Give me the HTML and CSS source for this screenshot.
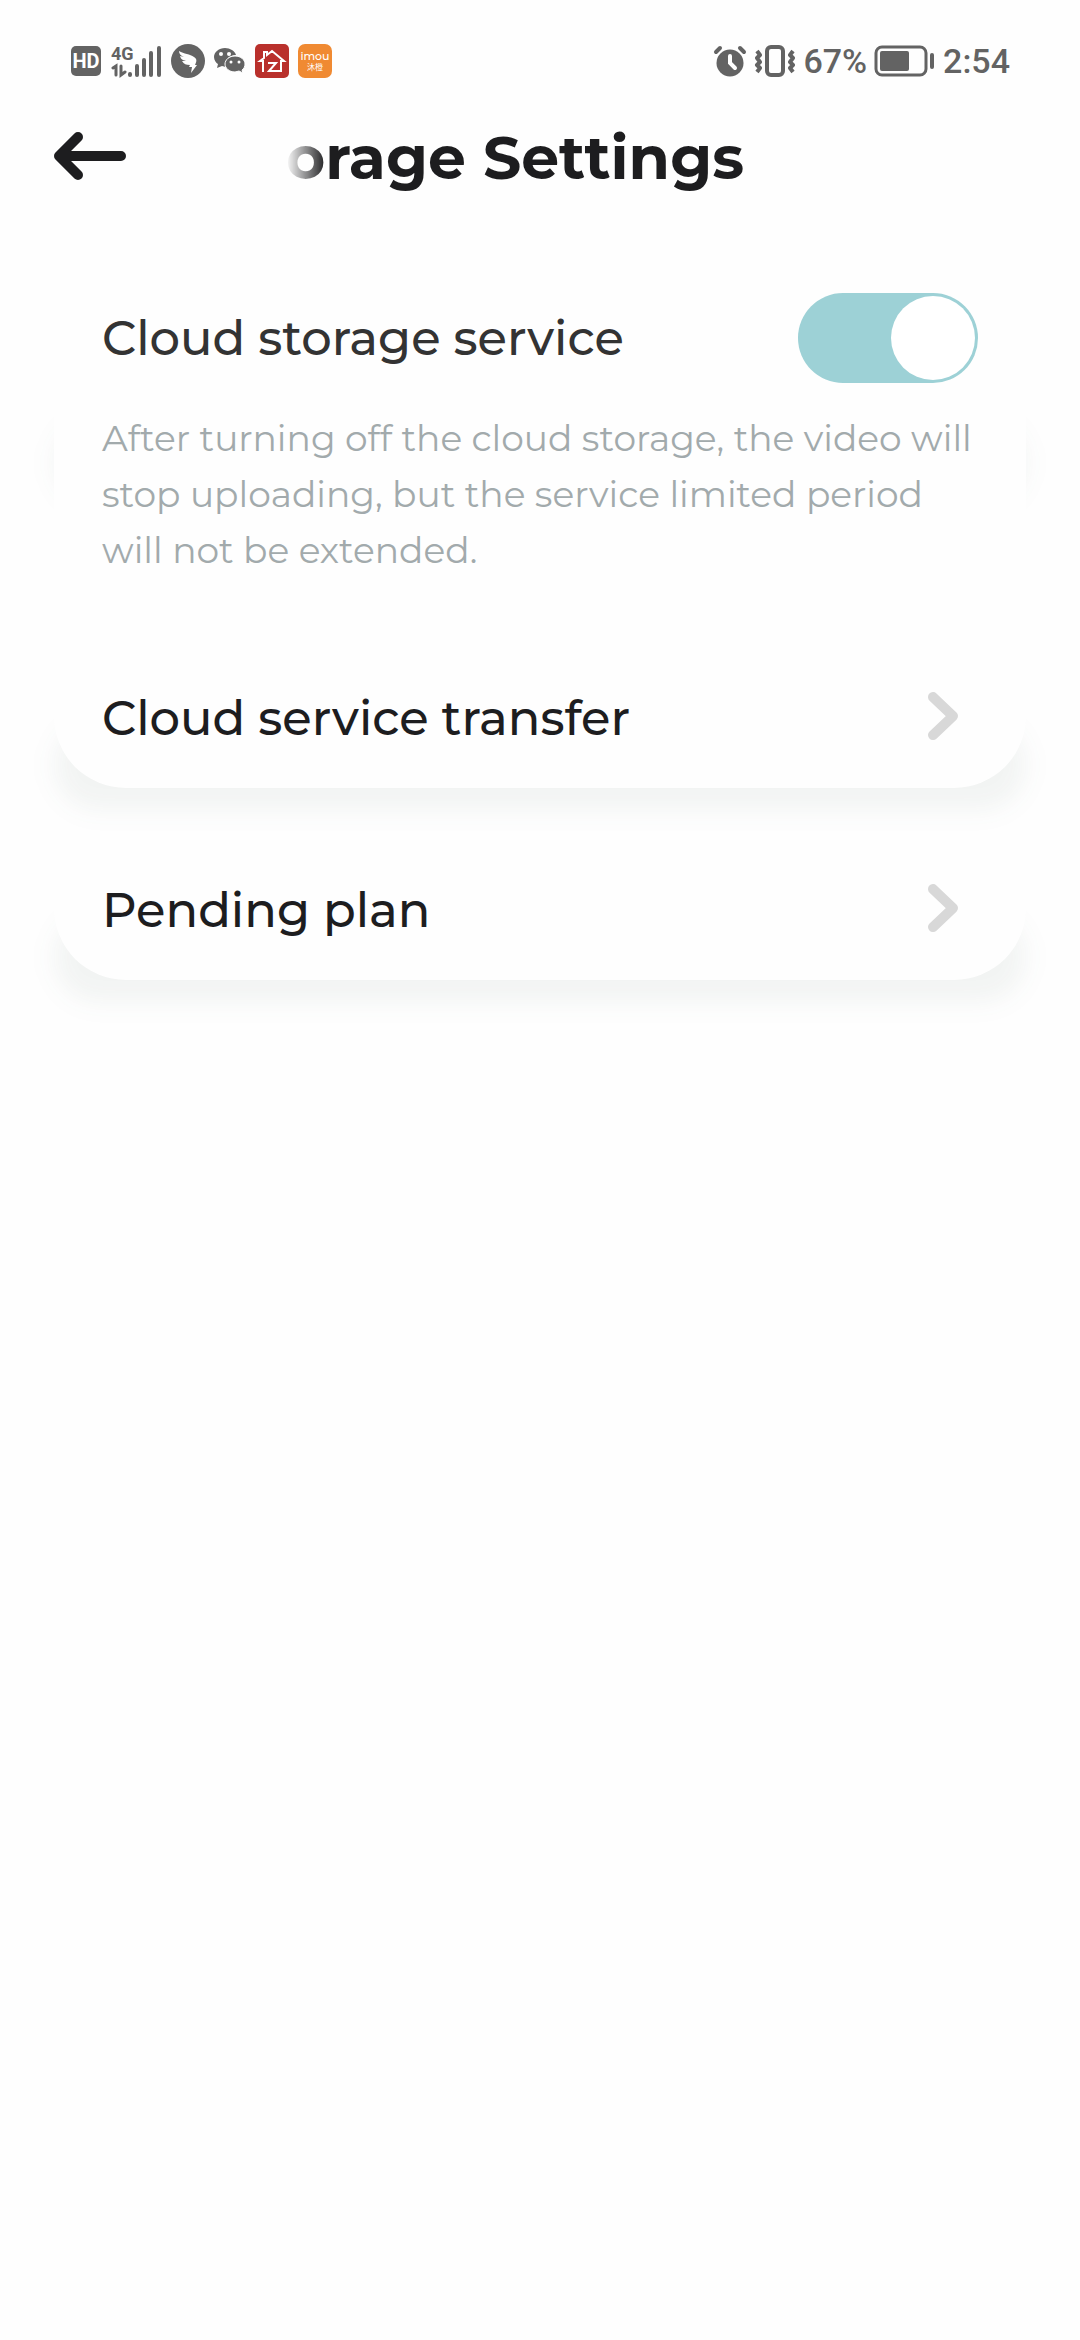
FILE: index.html
```
<!DOCTYPE html>
<html lang="en">
<head>
    <meta charset="UTF-8">
    <meta name="viewport" content="width=device-width, initial-scale=1.0">
    <title>Storage Settings</title>
    <link rel="stylesheet" href="styles.css">
</head>
<body>
    <!-- Status bar -->
    <div class="status-bar">
        <div class="status-left">
            <svg width="32" height="36" viewBox="0 0 32 36">
                <rect x="1" y="3" width="30" height="30" rx="5" fill="#636363"/>
                <text x="16" y="25" class="hd-text">HD</text>
            </svg>
            <svg width="51" height="36" viewBox="0 0 51 36">
                <text x="0" y="17" class="net-text">4G</text>
                <g stroke="#636363" stroke-linecap="round" fill="none">
                    <path d="M2 25l3-2v9M10 23v9l4-3" stroke-width="3"/>
                    <path d="M19 31v1M26 23v9M33 17v15M40 10v22M48 5v27" stroke-width="4"/>
                </g>
            </svg>
            <svg width="34" height="36" viewBox="0 0 34 36">
                <circle cx="17" cy="18" r="17" fill="#636363"/>
                <path d="M8 8c5 3 11 3 15 6 3 2 3 4 1 8h2l-6 8 1-6h-3l1-2c-4 0-6-1-8-4l4 0c-4-1-5-2-6-5l4 1c-3-1-5-3-5-6z" fill="#fff"/>
            </svg>
            <svg width="32" height="36" viewBox="0 0 32 36">
                <path d="M11 5C5 5 0 9 0 14c0 3 2 6 4 7l-1 4 5-2 4 1c-2-7 3-12 10-12-1-4-6-7-11-7z" fill="#636363"/>
                <path d="M21 13c-6 0-10 4-10 8s4 8 10 8l4-1 4 2-1-3c2-1 3-4 3-6 0-4-4-8-10-8z" fill="#636363" stroke="#fefefe" stroke-width="1"/>
                <circle cx="7" cy="11" r="2" fill="#fff"/>
                <circle cx="15" cy="11" r="2" fill="#fff"/>
                <circle cx="17" cy="19" r="1.5" fill="#fff"/>
                <circle cx="25" cy="19" r="1.5" fill="#fff"/>
            </svg>
            <svg width="34" height="36" viewBox="0 0 34 36">
                <rect y="1" width="34" height="34" rx="5" fill="#b9302c"/>
                <path d="M8 29V18H5l4-3V9h3v3l5-4 12 10h-3v10h-5M13 20h8l-7 8h8" fill="none" stroke="#fff" stroke-width="2"/>
            </svg>
            <svg width="34" height="36" viewBox="0 0 34 36">
                <rect y="1" width="34" height="34" rx="7" fill="#f08a32"/>
                <text x="17" y="17" class="imou-text">imou</text>
                <text x="17" y="27" class="imou-sub">沐橙</text>
            </svg>
        </div>
        <div class="status-right">
            <svg width="34" height="36" viewBox="0 0 34 36">
                <circle cx="17" cy="20" r="13.5" fill="#636363"/>
                <path d="M3 9l4-4M31 9l-4-4" stroke="#636363" stroke-width="4" stroke-linecap="round"/>
                <path d="M17 13v7l5 5" fill="none" stroke="#fff" stroke-width="4" stroke-linecap="round"/>
            </svg>
            <svg width="42" height="36" viewBox="0 0 42 36" fill="none" stroke="#636363">
                <rect x="13" y="4" width="16" height="28" rx="4" stroke-width="4"/>
                <path d="M3 8l3 4-3 3 3 4-3 3 3 3-3 4M39 8l-3 4 3 3-3 4 3 3-3 3 3 4" stroke-width="4" stroke-linejoin="round"/>
            </svg>
            <span>67%</span>
            <svg width="62" height="36" viewBox="0 0 62 36">
                <rect x="2" y="4" width="50" height="28" rx="6" fill="none" stroke="#636363" stroke-width="3"/>
                <rect x="6" y="8" width="29" height="20" rx="2" fill="#636363"/>
                <path d="M58 12v12" stroke="#636363" stroke-width="4" stroke-linecap="round"/>
            </svg>
            <span>2:54</span>
        </div>
    </div>

    <!-- Page header -->
    <header class="header">
        <a class="back" href="#" aria-label="Back">
            <svg width="72" height="48" viewBox="0 0 72 48" fill="none" stroke="#1d1d1f" stroke-width="10" stroke-linecap="round" stroke-linejoin="round">
                <path d="M24 5L5 24l19 19M5 24h62"/>
            </svg>
        </a>
        <h1 class="title">orage Settings</h1>
    </header>

    <main class="settings">
        <section class="service">
            <div class="service-row">
                <label for="cloud-service">Cloud storage service</label>
                <input class="switch" type="checkbox" role="switch" id="cloud-service" checked>
            </div>
            <p class="description">After turning off the cloud storage, the video will stop uploading, but the service limited period will not be extended.</p>
        </section>

        <a class="card" href="#">
            <span>Cloud service transfer</span>
            <svg width="30" height="48" viewBox="0 0 30 48" fill="none" stroke="#d8d8d8" stroke-width="10" stroke-linecap="round" stroke-linejoin="round">
                <path d="M5 5l20 19L5 43"/>
            </svg>
        </a>

        <a class="card" href="#">
            <span>Pending plan</span>
            <svg width="30" height="48" viewBox="0 0 30 48" fill="none" stroke="#d8d8d8" stroke-width="10" stroke-linecap="round" stroke-linejoin="round">
                <path d="M5 5l20 19L5 43"/>
            </svg>
        </a>
    </main>
</body>
</html>
```
FILE: styles.css
```
/* General */
* {
    box-sizing: border-box;
}

body {
    margin: 0;
    min-height: 100vh;
    background: #fefefe;
    color: #1d1d1f;
    font-family: Montserrat, Inter, sans-serif;
}

svg {
    display: block;
    flex-shrink: 0;
}

/* Status bar */
.status-bar {
    display: flex;
    justify-content: space-between;
    align-items: center;
    height: 108px;
    padding: 14px 70px 0;
    color: #636363;
    font-family: Roboto, sans-serif;
    font-size: 34px;
    font-weight: 500;
}

.status-left,
.status-right {
    display: flex;
    align-items: center;
    gap: 9px;
}

.status-right {
    gap: 7px;
}

.hd-text {
    fill: #fff;
    font-size: 20px;
    font-weight: 700;
    text-anchor: middle;
}

.net-text {
    fill: #636363;
    font-family: "Liberation Sans Narrow", Roboto, sans-serif;
    font-size: 18px;
    font-weight: 700;
}

.imou-text {
    fill: #fff;
    font-family: Montserrat, Inter, sans-serif;
    font-size: 11px;
    font-weight: 500;
    text-anchor: middle;
}

.imou-sub {
    fill: #fff;
    font-family: "Noto Sans CJK SC", sans-serif;
    font-size: 8px;
    font-weight: 400;
    text-anchor: middle;
}

/* Header */
.header {
    display: flex;
    align-items: center;
    height: 100px;
    padding: 0 54px;
}

.back {
    margin-right: 160px;
    padding-bottom: 4px;
}

.title {
    margin: 0;
    font-size: 60px;
    font-weight: 700;
    line-height: 80px;
    white-space: nowrap;
    -webkit-mask-image: linear-gradient(to right, transparent, #000 40px);
    mask-image: linear-gradient(to right, transparent, #000 40px);
}

/* Settings list */
.settings {
    display: flex;
    flex-direction: column;
    gap: 48px;
    padding: 60px 54px;
    font-size: 48px;
    font-weight: 500;
    line-height: 60px;
}

.service,
.card {
    position: relative;
    z-index: 0;
    padding: 0 48px;
}

.service {
    padding-bottom: 18px;
}

.service-row {
    display: flex;
    justify-content: space-between;
    align-items: center;
    height: 140px;
    color: #333;
}

.description {
    margin: 0;
    padding-top: 2px;
    color: #a2aaac;
    font-size: 36px;
    font-weight: 400;
    line-height: 56px;
}

.card {
    display: flex;
    justify-content: space-between;
    align-items: center;
    height: 144px;
    padding-right: 68px;
    color: inherit;
    text-decoration: none;
}

.card span {
    padding-top: 4px;
}

/* Soft shadow below each card, covered by the card's own face */
.service::before,
.card::before {
    content: "";
    position: absolute;
    left: 0;
    right: 0;
    bottom: -22px;
    z-index: -2;
    height: 90px;
    border-radius: 45px;
    background: rgba(50, 80, 75, 0.06);
    filter: blur(12px);
}

.service::before {
    bottom: 88px;
}

.service::after,
.card::after {
    content: "";
    position: absolute;
    inset: 0;
    z-index: -1;
    background: #fefefe;
}

.card::after {
    border-radius: 0 0 72px 72px;
}

/* Switch */
.switch {
    appearance: none;
    display: flex;
    align-items: center;
    width: 180px;
    height: 90px;
    margin: 0;
    padding: 3px;
    border-radius: 45px;
    background: #d8d8d8;
    cursor: pointer;
}

.switch::before {
    content: "";
    width: 84px;
    height: 84px;
    border-radius: 50%;
    background: #fff;
}

.switch:checked {
    justify-content: flex-end;
    background: #9dd1d6;
}
```
